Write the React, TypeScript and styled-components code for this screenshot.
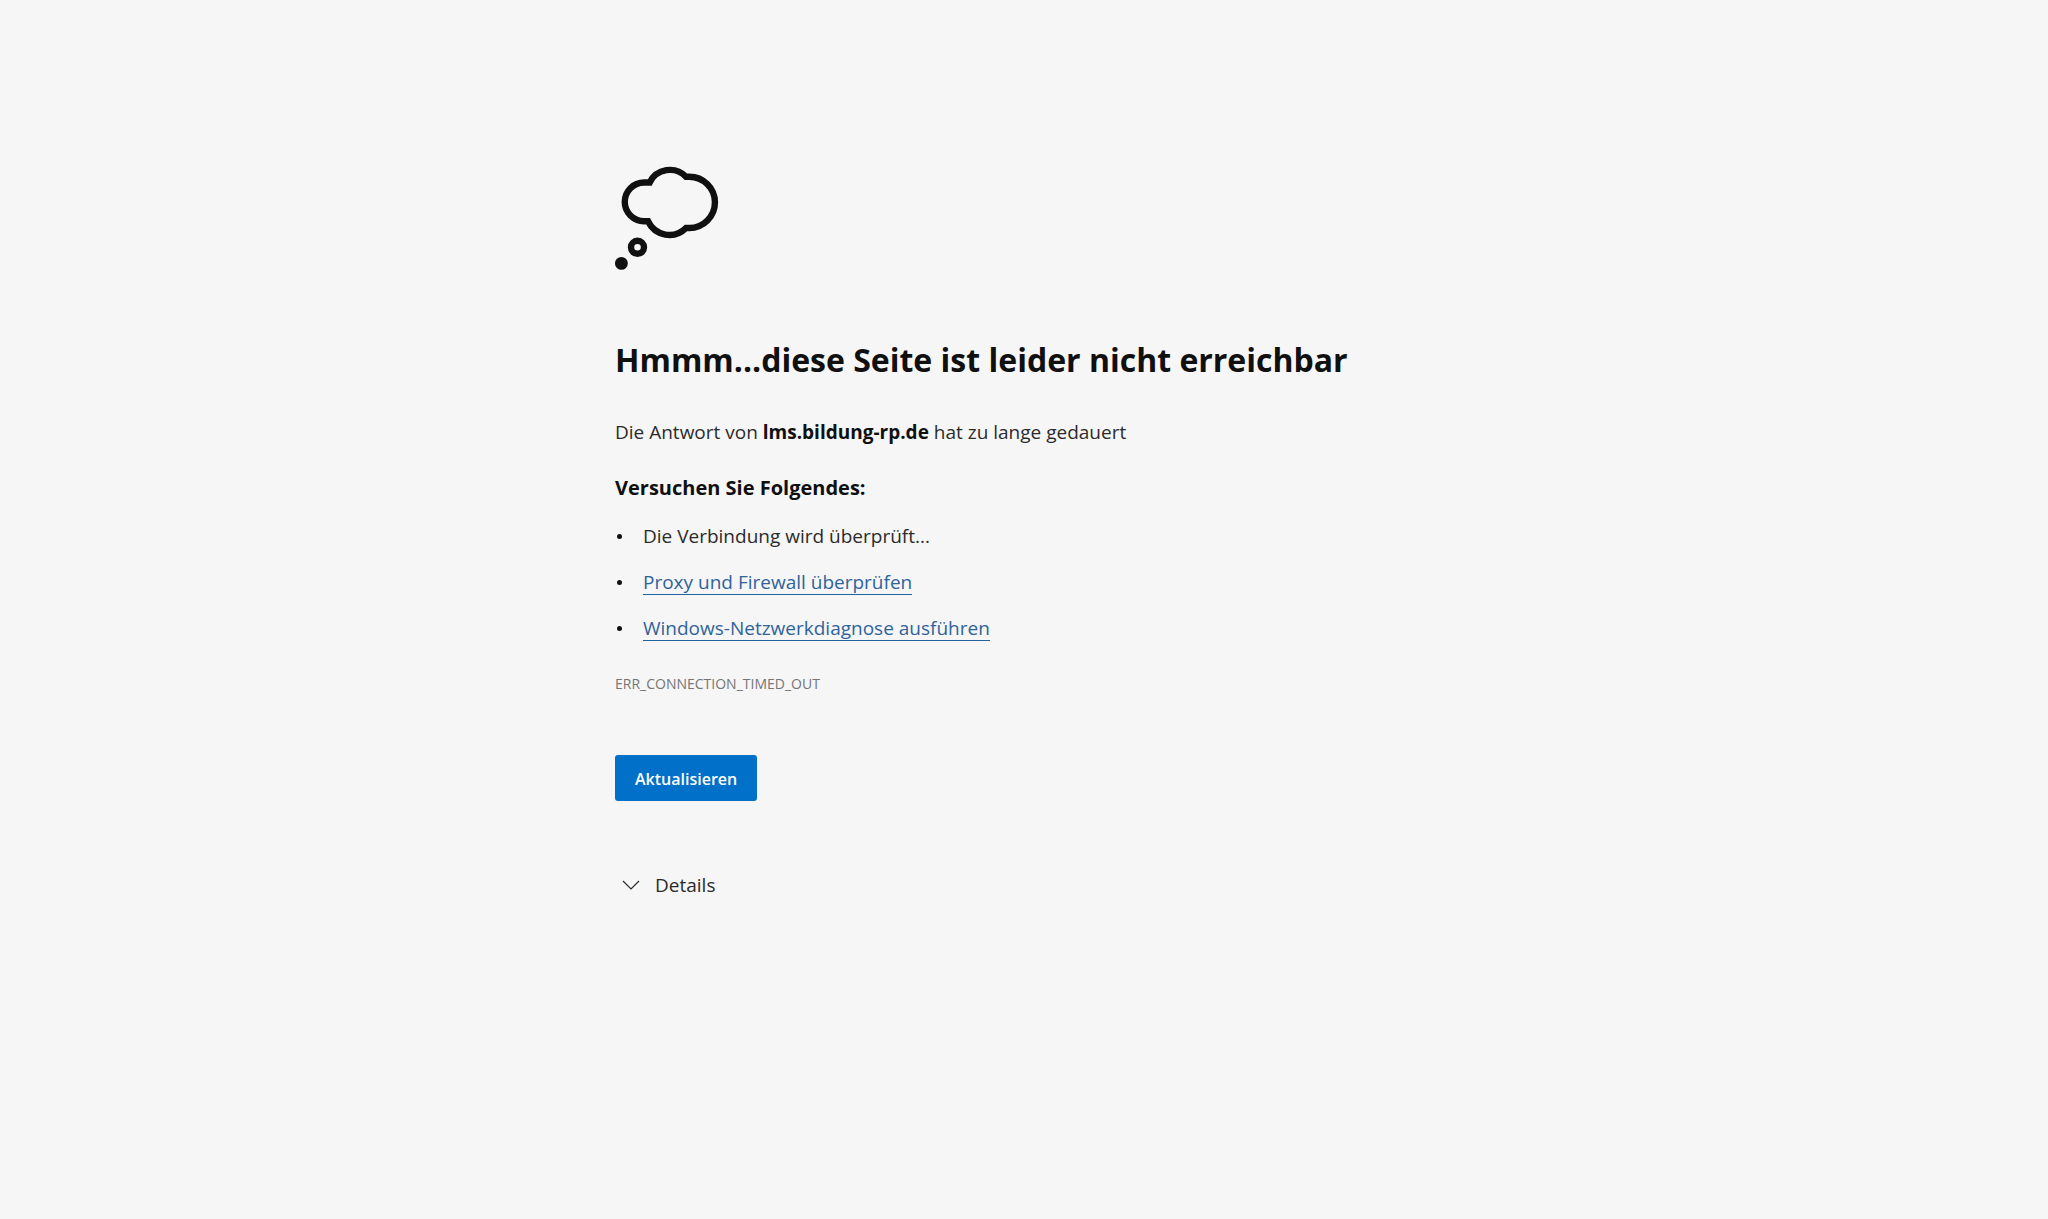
import React, { useState } from "react";
import styled, { createGlobalStyle } from "styled-components";

const GlobalStyle = createGlobalStyle`
  body {
    margin: 0;
    background: #f6f6f6;
    color: #101010;
    font-family: "Segoe UI", "Open Sans", "Noto Sans", sans-serif;
    font-size: 19px;
    line-height: 28px;
  }
`;

const Page = styled.main`
  box-sizing: border-box;
  max-width: 866px;
  margin: 0 auto;
  padding: 166px 24px 48px;
`;

const Cloud = styled.svg`
  display: block;
  width: 104px;
  height: 104px;
`;

const Title = styled.h1`
  margin: 66px 0 0;
  font-size: 32px;
  font-weight: 700;
  line-height: 48px;
`;

const Summary = styled.p`
  margin: 34px 0 0;
  color: #2b2b2b;

  strong {
    color: #101010;
    font-weight: 700;
  }
`;

const Subtitle = styled.h2`
  margin: 28px 0 0;
  font-size: 20px;
  font-weight: 700;
  line-height: 28px;
`;

const Suggestions = styled.ul`
  display: grid;
  gap: 18px;
  margin: 20px 0 0;
  padding: 0;
  list-style: none;
`;

const Suggestion = styled.li`
  display: flex;
  align-items: center;
  min-height: 28px;
  color: #2b2b2b;

  &::before {
    content: "";
    width: 5px;
    height: 5px;
    margin: 0 21px 0 2px;
    border-radius: 50%;
    background: #101010;
  }
`;

const Link = styled.a`
  box-sizing: border-box;
  height: 26px;
  border-bottom: 1px solid #2262a0;
  color: #2f639c;
  line-height: 26px;
  text-decoration: none;
`;

const ErrorCode = styled.p`
  margin: 32px 0 0;
  color: #757575;
  font-size: 14px;
  font-weight: 500;
  line-height: 20px;
`;

const Refresh = styled.button`
  display: block;
  height: 46px;
  margin: 61px 0 0;
  padding: 1px 20px 0;
  border: 0;
  border-radius: 3px;
  background: #0070c8;
  color: #ffffff;
  font: inherit;
  font-size: 16px;
  font-weight: 600;
`;

const DetailsToggle = styled.button`
  display: flex;
  align-items: center;
  gap: 15px;
  margin: 70px 0 0;
  padding: 0 7px;
  border: 0;
  background: none;
  color: #2b2b2b;
  font: inherit;
`;

const Chevron = styled.svg`
  width: 18px;
  height: 10px;
`;

export default function App() {
  const [open, setOpen] = useState(false);

  return (
    <>
      <GlobalStyle />
      <Page>
        <Cloud viewBox="0 0 104 104" fill="none" stroke="#101010" strokeWidth="6.4" aria-hidden="true">
          <path d="M34.7 16.5H29.1A19.35 19.35 0 0 0 29.1 55.2H33A23.5 23.5 0 0 0 71 62H74.3A25.65 25.65 0 0 0 74.3 10.7H71A22.5 22.5 0 0 0 34.7 16.5Z" />
          <circle cx="22.5" cy="81.3" r="6.5" />
          <circle cx="6.4" cy="97.4" r="6.4" fill="#101010" stroke="none" />
        </Cloud>
        <Title>Hmmm...diese Seite ist leider nicht erreichbar</Title>
        <Summary>
          Die Antwort von <strong>lms.bildung-rp.de</strong> hat zu lange gedauert
        </Summary>
        <Subtitle>Versuchen Sie Folgendes:</Subtitle>
        <Suggestions>
          <Suggestion>Die Verbindung wird überprüft...</Suggestion>
          <Suggestion>
            <Link href="#proxy">Proxy und Firewall überprüfen</Link>
          </Suggestion>
          <Suggestion>
            <Link href="#diagnose">Windows-Netzwerkdiagnose ausführen</Link>
          </Suggestion>
        </Suggestions>
        <ErrorCode>ERR_CONNECTION_TIMED_OUT</ErrorCode>
        <Refresh type="button">Aktualisieren</Refresh>
        <DetailsToggle type="button" aria-expanded={open} onClick={() => setOpen(!open)}>
          <Chevron viewBox="0 0 18 10" fill="none" stroke="#2b2b2b" strokeWidth="1.2" aria-hidden="true">
            <path d="M1 1L9 9L17 1" />
          </Chevron>
          Details
        </DetailsToggle>
      </Page>
    </>
  );
}
